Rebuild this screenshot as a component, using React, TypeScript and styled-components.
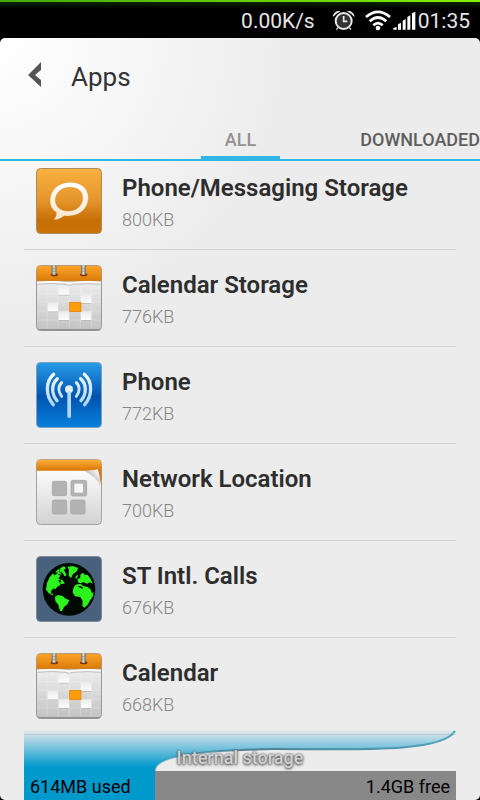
import React from "react";
import styled, { createGlobalStyle } from "styled-components";

const GlobalStyle = createGlobalStyle`
  *, *::before, *::after { box-sizing: border-box; }
  body { margin: 0; background: #000; font-family: Roboto, "Liberation Sans", sans-serif; }
  button { font: inherit; border: 0; margin: 0; padding: 0; background: none; color: inherit; cursor: pointer; text-align: left; }
`;

const Screen = styled.div`
  display: flex;
  flex-direction: column;
  height: 100vh;
  overflow: hidden;
`;

const StatusBar = styled.header`
  flex: none;
  display: flex;
  align-items: center;
  justify-content: flex-end;
  height: 38px;
  padding: 4px 10px 0 0;
  color: #e6e6e6;
  font-size: 21px;
  line-height: 24px;
  background:
    linear-gradient(90deg, #46a800, #84f000) top / 100% 2px no-repeat,
    linear-gradient(180deg, #0d2400 2px, #000 9px);
`;

const Speed = styled.span`
  margin-right: 18px;
`;

const StatusIcon = styled.svg<{ $gap: number }>`
  flex: none;
  display: block;
  margin-right: ${(p) => p.$gap}px;
`;

const Panel = styled.main`
  flex: 1;
  min-height: 0;
  display: flex;
  flex-direction: column;
  overflow: hidden;
  border-radius: 5px;
  background: radial-gradient(circle at 0 0, #ffffff 0, #f7f7f7 130px, #ececec 290px);
`;

const TitleBar = styled.div`
  flex: none;
  display: flex;
  align-items: center;
  height: 76px;
  padding-left: 28px;
`;

const BackButton = styled.button`
  display: block;
  width: 43px;
  height: 28px;
`;

const Title = styled.h1`
  margin: 0;
  padding-top: 2px;
  font-size: 26px;
  line-height: 32px;
  font-weight: 400;
  color: #333;
`;

const Tabs = styled.nav`
  flex: none;
  display: grid;
  grid-template-columns: 1fr 79px 1fr;
  height: 47px;
  padding-left: 1px;
  border-bottom: 2px solid #33b5e5;
`;

const Tab = styled.button<{ $active?: boolean }>`
  grid-column: ${(p) => (p.$active ? 2 : 3)};
  height: 45px;
  padding-top: 10px;
  font-size: 18px;
  line-height: 20px;
  font-weight: 500;
  text-align: ${(p) => (p.$active ? "center" : "right")};
  color: ${(p) => (p.$active ? "#929292" : "#5e5e5e")};
  border-bottom: 3px solid ${(p) => (p.$active ? "#33b5e5" : "transparent")};
`;

const ListViewport = styled.div`
  flex: 1;
  min-height: 0;
  overflow: hidden;
`;

const AppList = styled.ul`
  list-style: none;
  margin: -8px 24px 0;
  padding: 0;
`;

const AppRow = styled.li`
  border-bottom: 1px solid #d2d2d2;
`;

const AppButton = styled.button`
  display: flex;
  gap: 20px;
  width: 100%;
  height: 96px;
  padding: 15px 12px;
`;

const AppIcon = styled.svg`
  flex: none;
  width: 66px;
  height: 66px;
`;

const AppText = styled.span`
  display: flex;
  flex-direction: column;
  gap: 4px;
  padding-top: 4px;
`;

const AppName = styled.span`
  font-size: 24px;
  line-height: 32px;
  font-weight: 600;
  color: #2d2d2d;
  white-space: nowrap;
`;

const AppSize = styled.span`
  font-size: 18px;
  line-height: 24px;
  font-weight: 300;
  color: #858585;
`;

const Storage = styled.footer`
  position: relative;
  flex: none;
  margin: 0 24px;
`;

const StorageLid = styled.div`
  position: absolute;
  left: 0;
  right: 0;
  bottom: 100%;
  height: 42px;
`;

const Wave = styled.svg`
  display: block;
  width: 100%;
  height: 100%;
`;

const StorageLabel = styled.div`
  position: absolute;
  left: 0;
  right: 0;
  bottom: 3px;
  font-size: 18px;
  line-height: 20px;
  font-weight: 500;
  text-align: center;
  color: #d2d2d2;
  text-shadow: 0 1px 3px #444, 0 0 2px #555;
`;

const StorageBar = styled.div`
  display: flex;
  height: 29px;
  font-size: 18px;
  line-height: 32px;
  color: #000;
`;

const Used = styled.span<{ $share: number }>`
  flex: none;
  width: ${(p) => p.$share}%;
  padding-left: 6px;
  background: #0099cc;
  white-space: nowrap;
`;

const Free = styled.span`
  flex: 1;
  padding-right: 6px;
  text-align: right;
  background: #888;
`;

const frame = (y: number, fill: string, stroke: string) => (
  <rect x="19.5" y={y + 1.5} width="195" height="195" rx="12" fill={fill} stroke={stroke} strokeWidth="3" />
);

function MessagingIcon() {
  return (
    <AppIcon viewBox="18 24 198 198" aria-hidden="true">
      <defs>
        <linearGradient id="msgBg" x1="0" y1="0" x2="0" y2="1">
          <stop offset="0" stopColor="#fbb040" />
          <stop offset="0.5" stopColor="#e4952a" />
          <stop offset="0.8" stopColor="#c66f05" />
          <stop offset="1" stopColor="#c87208" />
        </linearGradient>
        <linearGradient id="msgBubble" x1="0" y1="0" x2="0" y2="1">
          <stop offset="0" stopColor="#fff" />
          <stop offset="1" stopColor="#fbe6cc" />
        </linearGradient>
      </defs>
      {frame(24, "url(#msgBg)", "#a98c5c")}
      <path
        fill="url(#msgBubble)"
        stroke="#c77f22"
        strokeWidth="1"
        fillRule="evenodd"
        d="M118 67C151 66 175 84 175 112C176 143 150 168 116 168C111 168 107 168 103 167C94 174 83 180 71 179C77 173 80 165 79 157C66 148 59 135 60 119C62 89 86 68 118 67ZM120 82C95 82 77 98 76 120C76 141 93 154 116 153C142 152 158 135 158 113C158 94 143 82 120 82Z"
      />
    </AppIcon>
  );
}

const calendarCells = [
  [86, 84],
  [153, 109],
  [53, 134],
  [86, 160],
  [153, 160],
] as const;

function CalendarIcon() {
  return (
    <AppIcon viewBox="18 21 198 198" aria-hidden="true">
      <defs>
        <linearGradient id="calPaper" x1="0" y1="0" x2="0" y2="1">
          <stop offset="0.2" stopColor="#f0f0f0" />
          <stop offset="1" stopColor="#c2c2c2" />
        </linearGradient>
        <linearGradient id="calTop" x1="0" y1="0" x2="0" y2="1">
          <stop offset="0" stopColor="#fba32b" />
          <stop offset="1" stopColor="#dc7c08" />
        </linearGradient>
        <linearGradient id="calRing" x1="0" y1="0" x2="1" y2="0">
          <stop offset="0" stopColor="#666" />
          <stop offset="0.5" stopColor="#e4e4e4" />
          <stop offset="1" stopColor="#666" />
        </linearGradient>
        <linearGradient id="calCell" x1="0" y1="0" x2="0" y2="1">
          <stop offset="0" stopColor="#ececec" />
          <stop offset="1" stopColor="#fdfdfd" />
        </linearGradient>
      </defs>
      {frame(21, "url(#calPaper)", "#999")}
      <path d="M20 68V34Q20 23 31 23H203Q214 23 214 34V68Z" fill="url(#calTop)" />
      <path d="M21 69H213" stroke="#a15400" strokeWidth="2" />
      <path d="M22 73Q65 69 107 74L118 78L130 74Q170 69 212 73" fill="none" stroke="#fff" strokeWidth="4" />
      <path d="M22 79Q65 74 107 79L117 82L130 79Q170 75 212 79" fill="none" stroke="#aaa" strokeWidth="2" />
      <path d="M22 107H212M22 132H212M22 159H212M22 186H212M51 83V212M84 83V212M118 83V212M151 83V212M184 83V212" stroke="#fff" strokeOpacity="0.35" strokeWidth="2" />
      <path d="M86 187H117M153 187H184M53 161H84M153 136H184M86 111H117" stroke="#aaa" strokeWidth="2" />
      {calendarCells.map(([x, y]) => (
        <rect key={`${x}-${y}`} x={x} y={y} width="31" height="26" fill="url(#calCell)" />
      ))}
      <rect x="119" y="133" width="34" height="28" fill="#ff9c0c" stroke="#e57b00" strokeWidth="2" />
      {[72, 160].map((x) => (
        <g key={x}>
          <ellipse cx={x + 1} cy="50" rx="11" ry="5" fill="#7e3505" />
          <rect x={x - 7} y="21" width="14" height="29" rx="3" fill="url(#calRing)" />
          <path d={`M${x - 7} 32h14M${x - 7} 40h14`} stroke="#777" strokeWidth="1.5" />
        </g>
      ))}
      <path d="M25 215H209" stroke="#858585" strokeWidth="3" />
    </AppIcon>
  );
}

function PhoneIcon() {
  return (
    <AppIcon viewBox="18 21 198 198" aria-hidden="true">
      <defs>
        <linearGradient id="phoneBg" x1="0" y1="0" x2="0" y2="1">
          <stop offset="0" stopColor="#289ce8" />
          <stop offset="0.52" stopColor="#0054ae" />
          <stop offset="1" stopColor="#0880dc" />
        </linearGradient>
        <linearGradient id="phoneWave" gradientUnits="userSpaceOnUse" x1="0" y1="52" x2="0" y2="190">
          <stop offset="0" stopColor="#f4faff" />
          <stop offset="1" stopColor="#8fc2ee" />
        </linearGradient>
      </defs>
      {frame(21, "url(#phoneBg)", "#7c9fbd")}
      <g fill="none" stroke="url(#phoneWave)" strokeLinecap="round">
        <path strokeWidth="10" d="M71 58C47 79 45 120 70 149M163 58C187 79 189 120 164 149" />
        <path strokeWidth="10" d="M82 71C64 87 63 115 81 137M152 71C170 87 171 115 153 137" />
        <path strokeWidth="9" d="M95 83C84 94 84 110 95 124M139 83C150 94 150 110 139 124" />
      </g>
      <circle cx="117" cy="103" r="12" fill="#e2f0fc" />
      <rect x="112" y="108" width="11" height="81" rx="5" fill="#b5d6f2" />
    </AppIcon>
  );
}

function NetworkIcon() {
  return (
    <AppIcon viewBox="18 21 198 198" aria-hidden="true">
      <defs>
        <linearGradient id="netPaper" x1="0" y1="0" x2="0" y2="1">
          <stop offset="0.2" stopColor="#fafafa" />
          <stop offset="1" stopColor="#d2d2d2" />
        </linearGradient>
        <linearGradient id="netTop" gradientUnits="userSpaceOnUse" x1="0" y1="23" x2="0" y2="57">
          <stop offset="0" stopColor="#fdb03c" />
          <stop offset="1" stopColor="#d87400" />
        </linearGradient>
        <linearGradient id="netFold" gradientUnits="userSpaceOnUse" x1="184" y1="78" x2="206" y2="58">
          <stop offset="0" stopColor="#bcbcbc" />
          <stop offset="1" stopColor="#fff" />
        </linearGradient>
      </defs>
      {frame(21, "url(#netPaper)", "#a3a3a3")}
      <path d="M20 56V34Q20 23 31 23H203Q214 23 214 34V100L203 53L170 56Z" fill="url(#netTop)" />
      <path d="M164 57Q188 57 203 52Q210 70 212 102Q200 76 164 57Z" fill="url(#netFold)" />
      <g fill="#b3b3b3" stroke="#a0a0a0" strokeWidth="2">
        <rect x="67" y="88" width="43" height="43" rx="5" />
        <rect x="67" y="144" width="43" height="42" rx="5" />
        <rect x="122" y="144" width="43" height="42" rx="5" />
        <rect x="123" y="85" width="47" height="47" rx="5" />
      </g>
      <rect x="133" y="95" width="26" height="27" fill="#f7f7f7" />
    </AppIcon>
  );
}

function GlobeIcon() {
  return (
    <AppIcon viewBox="18 18 198 198" aria-hidden="true">
      {frame(18, "#4a617d", "#7d8a99")}
      <circle cx="117" cy="118" r="79" fill="#020802" />
      <g fill="#2cf51c">
        <path d="M48 119L51 99L59 82L69 70L73 76L82 71L91 77L85 86L97 90L105 100L95 103L90 99L91 106L82 110L76 118L72 115L65 120L62 130L70 132L67 136L56 129Z" />
        <path d="M76 65L85 58L91 59L86 66ZM91 54L102 49L108 54L101 61L105 65L110 76L103 79L98 68L90 66ZM75 68L88 66L96 74L88 73Z" />
        <path d="M113 50L129 48L145 54L139 65L129 72L123 84L116 77L117 61Z" />
        <path d="M137 78L144 75L142 84L137 86ZM142 88L151 83L151 74L159 68L164 74L173 75L182 87L188 101L180 97L171 101L160 96L153 100L145 98Z" />
        <path d="M137 104L151 101L160 108L173 111L181 117L186 130L191 126L188 140L181 150L173 164L163 173L157 169L158 153L151 141L135 139L128 127L130 114Z" />
        <path d="M75 140L84 135L98 138L105 145L118 151L112 163L102 171L96 183L90 183L85 164L76 153Z" />
      </g>
      <path d="M178 103L186 104L183 108ZM142 109L151 107L160 113L157 116ZM85 91L91 90L94 95L88 98Z" fill="#020802" />
    </AppIcon>
  );
}

const apps = [
  { name: "Phone/Messaging Storage", size: "800KB", Icon: MessagingIcon },
  { name: "Calendar Storage", size: "776KB", Icon: CalendarIcon },
  { name: "Phone", size: "772KB", Icon: PhoneIcon },
  { name: "Network Location", size: "700KB", Icon: NetworkIcon },
  { name: "ST Intl. Calls", size: "676KB", Icon: GlobeIcon },
  { name: "Calendar", size: "668KB", Icon: CalendarIcon },
];

const waveEdge = "C418 24 330 20 250 20C200 21 131 23 131 42";

export default function App() {
  return (
    <>
      <GlobalStyle />
      <Screen>
        <StatusBar>
          <Speed>0.00K/s</Speed>
          <StatusIcon $gap={10} width="22" height="22" viewBox="310 30 66 66" aria-label="Alarm set">
            <circle cx="342" cy="63" r="24" fill="#333" stroke="#e8e8e8" strokeWidth="6" />
            <path d="M311 49Q313 34 330 34Q318 39 311 49ZM373 49Q371 34 354 34Q366 39 373 49Z" fill="#e8e8e8" stroke="#e8e8e8" strokeWidth="3" />
            <path d="M342 48V64H353" fill="none" stroke="#eee" strokeWidth="5" />
            <path d="M325 83L320 89M359 83L364 89" stroke="#ddd" strokeWidth="4" />
          </StatusIcon>
          <StatusIcon $gap={2} width="26" height="22" viewBox="405 28 78 66" aria-label="Wi-Fi">
            <g fill="none" stroke="#fff" strokeWidth="8">
              <path d="M408 49Q444 18 480 49" />
              <path d="M419 62Q444 39 469 62" />
              <path d="M430 74Q444 61 458 74" />
            </g>
            <circle cx="444" cy="82" r="7" fill="#fff" />
          </StatusIcon>
          <StatusIcon $gap={2} width="23" height="22" viewBox="488 28 69 66" aria-label="Signal">
            <path d="M489 87V82L499 79V87ZM503 87V71L512 66V87ZM517 87V60L526 55V87ZM531 87V49L540 44V87ZM545 87V38L555 33V87Z" fill="#fff" />
          </StatusIcon>
          <time>01:35</time>
        </StatusBar>
        <Panel>
          <TitleBar>
            <BackButton aria-label="Back">
              <svg width="14" height="26" viewBox="0 0 14 26" aria-hidden="true">
                <path d="M13 0V8L7 13L13 18V25L0 13Z" fill="#555" />
              </svg>
            </BackButton>
            <Title>Apps</Title>
          </TitleBar>
          <Tabs>
            <Tab $active>ALL</Tab>
            <Tab>DOWNLOADED</Tab>
          </Tabs>
          <ListViewport>
            <AppList>
              {apps.map(({ name, size, Icon }) => (
                <AppRow key={name}>
                  <AppButton>
                    <Icon />
                    <AppText>
                      <AppName>{name}</AppName>
                      <AppSize>{size}</AppSize>
                    </AppText>
                  </AppButton>
                </AppRow>
              ))}
            </AppList>
          </ListViewport>
          <Storage>
            <StorageLid>
              <Wave viewBox="0 0 432 42" preserveAspectRatio="none" aria-hidden="true">
                <defs>
                  <linearGradient id="lidBlue" gradientUnits="userSpaceOnUse" x1="0" y1="0" x2="0" y2="38">
                    <stop offset="0" stopColor="#0099cc" stopOpacity="0" />
                    <stop offset="1" stopColor="#0099cc" />
                  </linearGradient>
                  <linearGradient id="lidEdge" gradientUnits="userSpaceOnUse" x1="131" y1="0" x2="432" y2="0">
                    <stop offset="0" stopColor="#2f86a5" stopOpacity="0.3" />
                    <stop offset="0.3" stopColor="#4d7f90" />
                    <stop offset="1" stopColor="#4fa3bf" />
                  </linearGradient>
                </defs>
                <path d={`M0 0H432${waveEdge}H0Z`} fill="url(#lidBlue)" />
                <path d={`M431 2${waveEdge}`} fill="none" stroke="url(#lidEdge)" strokeWidth="2" />
              </Wave>
              <StorageLabel>Internal storage</StorageLabel>
            </StorageLid>
            <StorageBar>
              <Used $share={30.3}>614MB used</Used>
              <Free>1.4GB free</Free>
            </StorageBar>
          </Storage>
        </Panel>
      </Screen>
    </>
  );
}
